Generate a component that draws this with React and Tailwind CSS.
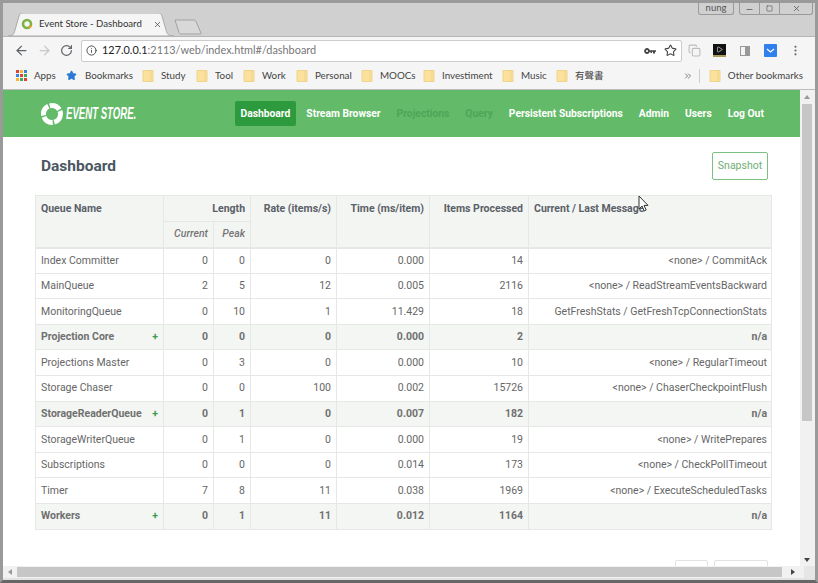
import { ArrowLeft, ArrowRight, RotateCw, Info, Star, Copy, MoreVertical, Play, ChevronsRight, Minus, Square, X } from 'lucide-react'

const bookmarks = [
  { name: 'Study', w: 'w-[54px]' },
  { name: 'Tool', w: 'w-[47px]' },
  { name: 'Work', w: 'w-[53px]' },
  { name: 'Personal', w: 'w-[65px]' },
  { name: 'MOOCs', w: 'w-[62px]' },
  { name: 'Investiment', w: 'w-[79px]' },
  { name: 'Music', w: 'w-[54px]' },
]

const navItems = [
  { label: 'Dashboard', active: true },
  { label: 'Stream Browser' },
  { label: 'Projections', dim: true },
  { label: 'Query', dim: true },
  { label: 'Persistent Subscriptions' },
  { label: 'Admin' },
  { label: 'Users' },
  { label: 'Log Out' },
]

const rows = [
  ['Index Committer', '0', '0', '0', '0.000', '14', '<none> / CommitAck'],
  ['MainQueue', '2', '5', '12', '0.005', '2116', '<none> / ReadStreamEventsBackward'],
  ['MonitoringQueue', '0', '10', '1', '11.429', '18', 'GetFreshStats / GetFreshTcpConnectionStats'],
  ['Projection Core', '0', '0', '0', '0.000', '2', 'n/a', true],
  ['Projections Master', '0', '3', '0', '0.000', '10', '<none> / RegularTimeout'],
  ['Storage Chaser', '0', '0', '100', '0.002', '15726', '<none> / ChaserCheckpointFlush'],
  ['StorageReaderQueue', '0', '1', '0', '0.007', '182', 'n/a', true],
  ['StorageWriterQueue', '0', '1', '0', '0.000', '19', '<none> / WritePrepares'],
  ['Subscriptions', '0', '0', '0', '0.014', '173', '<none> / CheckPollTimeout'],
  ['Timer', '7', '8', '11', '0.038', '1969', '<none> / ExecuteScheduledTasks'],
  ['Workers', '0', '1', '11', '0.012', '1164', 'n/a', true],
]

function Folder() {
  return (
    <svg width="12" height="14" viewBox="0 0 12 14" className="shrink-0">
      <path d="M1 1.500h10v11H1z" fill="#fbe19c" stroke="#efd48c" />
      <path d="M9 2v10" stroke="#f0d38a" />
    </svg>
  )
}

function Favicon() {
  return (
    <svg width="12" height="12" viewBox="0 0 12 12" className="shrink-0">
      <circle cx="6" cy="6" r="4" fill="none" stroke="#7cb342" strokeWidth="2.600" />
      <path d="M7.500 9.700a4 4 0 0 0 2.200-2.200" fill="none" stroke="#e0a63a" strokeWidth="2.600" />
    </svg>
  )
}

function KeyIcon() {
  return (
    <svg width="12" height="8" viewBox="0 0 12 8" className="shrink-0">
      <circle cx="3" cy="4" r="2" fill="none" stroke="#444" strokeWidth="1.800" />
      <path d="M5 3.200h7v1.600h-1v1.700H9V4.800H8v1.200H6.500V4.800H5z" fill="#444" />
    </svg>
  )
}

function Logo() {
  return (
    <svg width="24" height="24" viewBox="0 0 24 24" className="shrink-0">
      <circle cx="12" cy="12" r="8.500" fill="none" stroke="#fff" strokeWidth="5" strokeDasharray="11 1.500" />
    </svg>
  )
}

function Cursor() {
  return (
    <svg width="11" height="17" viewBox="0 0 11 17" className="absolute left-[635px] top-[192px]">
      <path d="M1 1v13l3-3 2.200 5 2-1-2.200-4.600H10z" fill="#fff" stroke="#333" strokeWidth="1" />
    </svg>
  )
}

export default function App() {
  return (
    <div className="relative w-[818px] h-[583px] overflow-hidden flex flex-col bg-[#d0d0d0] border-[3px] border-b-[3px] border-[#9a9a9a] border-b-[#666] font-['Lato',sans-serif]">
      {/* Tab strip */}
      <div className="h-[33px] shrink-0 flex justify-between pl-[5px] pr-[2px]">
        <div className="flex items-end">
          <div className="relative w-[168px] h-[23px] pb-[1px] flex items-center gap-[6px] pl-[13px]">
            <svg width="168" height="23" viewBox="0 0 168 23" className="absolute inset-0">
              <path d="M0 23c5 0 6-2 7-6l4-14c.5-2 1.500-3 4-3h135c2.500 0 3.500 1 4 3l4 14c1 4 2 6 8 6z" fill="#f5f5f5" stroke="#aaa" />
            </svg>
            <span className="relative"><Favicon /></span>
            <span className="relative w-[102px] text-[9.6px] leading-none text-[#333] whitespace-nowrap">Event Store - Dashboard</span>
            <X size={9} strokeWidth={2} className="relative ml-[6px] text-[#444]" />
          </div>
          <svg width="28" height="16" viewBox="0 0 28 16" className="ml-[-2px] mb-[1px]">
            <path d="M1 1h19c1 0 1.500.5 2 1.500L27 14c.3 1 0 1-1 1H7c-1 0-1.500-.5-2-1.500z" fill="#d8d8d8" stroke="#a2a2a2" />
          </svg>
        </div>
        <div className="flex items-start gap-[5px]">
          <div className="w-[36px] h-[12px] border border-t-0 border-[#999] rounded-b-[3px] text-[9.5px] leading-[10px] text-center text-[#555]">nung</div>
          <div className="w-[74px] h-[12px] border border-t-0 border-[#999] rounded-b-[3px] flex text-[#555]">
            <div className="w-[20px] border-r border-[#999] flex items-end justify-center"><Minus size={9} /></div>
            <div className="w-[20px] border-r border-[#999] flex items-center justify-center"><Square size={7} /></div>
            <div className="flex-1 flex items-center justify-center"><X size={9} /></div>
          </div>
        </div>
      </div>

      {/* Toolbar */}
      <div className="h-[28px] shrink-0 bg-[#f5f5f5] border-t border-[#b5b5b5] flex items-center pl-[11px]">
        <ArrowLeft size={15} strokeWidth={2} className="text-[#5f6368]" />
        <ArrowRight size={15} strokeWidth={2} className="ml-[8px] text-[#c8c8c8]" />
        <RotateCw size={13} strokeWidth={2.2} className="ml-[8px] text-[#5f6368]" />
        <div className="ml-[8px] w-[601px] h-[22px] bg-white border border-[#ccc] rounded-[2px] flex items-center pl-[4px] pr-[4px]">
          <Info size={11} className="text-[#444]" />
          <span className="ml-[5px] text-[10.9px] leading-none text-[#222] whitespace-nowrap">127.0.0.1<span className="text-[#777]">:2113/web/index.html#/dashboard</span></span>
          <span className="ml-auto"><KeyIcon /></span>
          <Star size={13} className="ml-[8px] text-[#444]" />
        </div>
        <Copy size={13} className="ml-[6px] text-[#bbb]" />
        <div className="ml-[12px] w-[13px] h-[13px] bg-[#111] border-b-2 border-[#a89a5a] flex items-center justify-center">
          <Play size={7} className="text-white" />
        </div>
        <div className="ml-[14px] w-[10px] h-[10px] border border-[#999] flex">
          <div className="w-1/2 bg-[#f5f5f5]" />
          <div className="w-1/2 bg-[#999]" />
        </div>
        <div className="ml-[14px] w-[13px] h-[13px] bg-[#2f80ed] rounded-[1px] flex items-center justify-center">
          <svg width="9" height="7" viewBox="0 0 9 7"><path d="M1 2l3.500 3L8 2" fill="none" stroke="#fff" strokeWidth="1.200" /></svg>
        </div>
        <MoreVertical size={13} className="ml-[12px] text-[#666]" />
      </div>

      {/* Bookmarks bar */}
      <div className="h-[26px] shrink-0 bg-[#f5f5f5] border-b border-[#bbb] pb-[2px] flex items-center pl-[13px] pr-[12px] text-[9.8px] text-[#444] whitespace-nowrap">
        <div className="w-[11px] h-[11px] grid grid-cols-3 gap-[1px]">
          {['bg-[#d9433a]', 'bg-[#f2b632]', 'bg-[#3d82e0]', 'bg-[#3d82e0]', 'bg-[#d9433a]', 'bg-[#3fa95a]', 'bg-[#f2b632]', 'bg-[#3fa95a]', 'bg-[#d9433a]'].map((c, i) => (
            <div key={i} className={c} />
          ))}
        </div>
        <span className="ml-[7px] w-[32px]">Apps</span>
        <Star size={11} className="text-[#2a78d6] fill-[#2a78d6]" />
        <span className="ml-[8px] w-[57px]">Bookmarks</span>
        {bookmarks.map(b => (
          <div key={b.name} className={`flex items-center gap-[7px] ${b.w}`}>
            <Folder />
            <span>{b.name}</span>
          </div>
        ))}
        <div className="flex items-center gap-[7px]">
          <Folder />
          <span className="font-['Noto_Sans_CJK_TC',sans-serif] text-[9.500px]">有聲書</span>
        </div>
        <ChevronsRight size={10} className="ml-auto text-[#666]" />
        <div className="ml-[6px] h-[14px] border-l border-[#ccc]" />
        <div className="ml-[9px] flex items-center gap-[7px]">
          <Folder />
          <span>Other bookmarks</span>
        </div>
      </div>

      {/* Page + vertical scrollbar */}
      <div className="h-[476px] shrink-0 flex bg-white">
        <div className="w-[797px] overflow-hidden font-['Roboto',sans-serif]">
          <header className="h-[47px] bg-[#63ba68] flex items-center pl-[37px]">
            <Logo />
            <span className="ml-[2px] w-[70px] text-[16px] font-bold italic text-white font-['Liberation_Sans',sans-serif] scale-x-[0.6] origin-left whitespace-nowrap">EVENT STORE.</span>
            <nav className="ml-[99px] flex text-[10.3px] font-bold text-white whitespace-nowrap">
              {navItems.map(item => (
                <div
                  key={item.label}
                  className={`h-[25px] px-[5.5px] mr-[5px] flex items-center rounded-[2px] ${item.active ? 'bg-[#2e9a3e]' : ''} ${item.dim ? 'text-[#4fa558]' : ''}`}
                >
                  {item.label}
                </div>
              ))}
            </nav>
          </header>

          <div className="flex items-center justify-between h-[58px] pl-[38px] pr-[32px]">
            <h1 className="mt-[2px] text-[15.5px] font-bold text-[#4b5763]">Dashboard</h1>
            <button className="w-[56px] h-[28px] border border-[#7cc182] rounded-[2px] text-[10.5px] text-[#6fae75]">Snapshot</button>
          </div>

          <table className="ml-[32px] w-[737px] table-fixed border-collapse text-[10.5px] text-[#666]">
            <colgroup>
              <col className="w-[128px]" />
              <col className="w-[50px]" />
              <col className="w-[37px]" />
              <col className="w-[86px]" />
              <col className="w-[93px]" />
              <col className="w-[99px]" />
              <col />
            </colgroup>
            <thead className="bg-[#f3f5f3] text-[#5a6068] font-bold">
              <tr className="h-[26px]">
                <th rowSpan={2} className="border border-[#e6e8e6] border-b-2 align-top text-left font-bold pl-[5px] pt-[5px]">Queue Name</th>
                <th colSpan={2} className="border border-[#e6e8e6] text-right font-bold pr-[5px]">Length</th>
                <th rowSpan={2} className="border border-[#e6e8e6] border-b-2 align-top text-right font-bold pr-[5px] pt-[5px]">Rate (items/s)</th>
                <th rowSpan={2} className="border border-[#e6e8e6] border-b-2 align-top text-right font-bold pr-[5px] pt-[5px]">Time (ms/item)</th>
                <th rowSpan={2} className="border border-[#e6e8e6] border-b-2 align-top text-right font-bold pr-[5px] pt-[5px]">Items Processed</th>
                <th rowSpan={2} className="border border-[#e6e8e6] border-b-2 align-top text-left font-bold pl-[5px] pt-[5px]">Current / Last Message</th>
              </tr>
              <tr className="h-[26px]">
                <th className="border border-[#e6e8e6] border-b-2 text-right font-medium italic text-[#777] pr-[5px]">Current</th>
                <th className="border border-[#e6e8e6] border-b-2 text-right font-medium italic text-[#777] pr-[5px]">Peak</th>
              </tr>
            </thead>
            <tbody>
              {rows.map(([name, current, peak, rate, time, items, message, group]) => (
                <tr key={name} className={`h-[25.6px] ${group ? 'bg-[#f3f6f3] font-bold text-[#707070]' : ''}`}>
                  <td className="border border-[#e6e8e6] pl-[5px] pr-[5px]">
                    <div className="flex justify-between items-center">
                      <span>{name}</span>
                      {group && <span className="text-[#3f9c4d]">+</span>}
                    </div>
                  </td>
                  {[current, peak, rate, time, items].map((value, i) => (
                    <td key={i} className="border border-[#e6e8e6] text-right pr-[5px]">{value}</td>
                  ))}
                  <td className="border border-[#e6e8e6] text-right pr-[4px]">{message}</td>
                </tr>
              ))}
            </tbody>
          </table>

          <div className="mt-[30px] ml-[672px] flex gap-[6px]">
            <div className="w-[33px] h-[28px] border border-[#e2e2e2] rounded-[2px]" />
            <div className="w-[54px] h-[28px] border border-[#e2e2e2] rounded-[2px]" />
          </div>
        </div>

        {/* Vertical scrollbar */}
        <div className="w-[15px] shrink-0 bg-[#f1f1f1] flex flex-col pl-[2px] pr-[3px]">
          <div className="h-[14px] flex items-center justify-center">
            <svg width="6" height="4" viewBox="0 0 6 4"><path d="M3 0l3 4H0z" fill="#999" /></svg>
          </div>
          <div className="w-full h-[317px] bg-[#c6c6c6]" />
          <div className="mt-auto h-[13px] flex items-center justify-center">
            <svg width="6" height="4" viewBox="0 0 6 4"><path d="M3 4L0 0h6z" fill="#444" /></svg>
          </div>
        </div>
      </div>

      {/* Horizontal scrollbar */}
      <div className="h-[12px] shrink-0 bg-[#f1f1f1] flex items-center">
        <div className="w-[14px] flex justify-center">
          <svg width="4" height="6" viewBox="0 0 4 6"><path d="M0 3l4-3v6z" fill="#999" /></svg>
        </div>
        <div className="w-[765px] h-[10px] bg-[#c6c6c6]" />
        <div className="w-[22px] flex justify-center">
          <svg width="4" height="6" viewBox="0 0 4 6"><path d="M4 3L0 0v6z" fill="#444" /></svg>
        </div>
        <div className="flex-1 h-full bg-[#e6e6e6]" />
      </div>
      <div className="h-[2px] shrink-0 bg-[#e2e2e2]" />

      <Cursor />
    </div>
  )
}
